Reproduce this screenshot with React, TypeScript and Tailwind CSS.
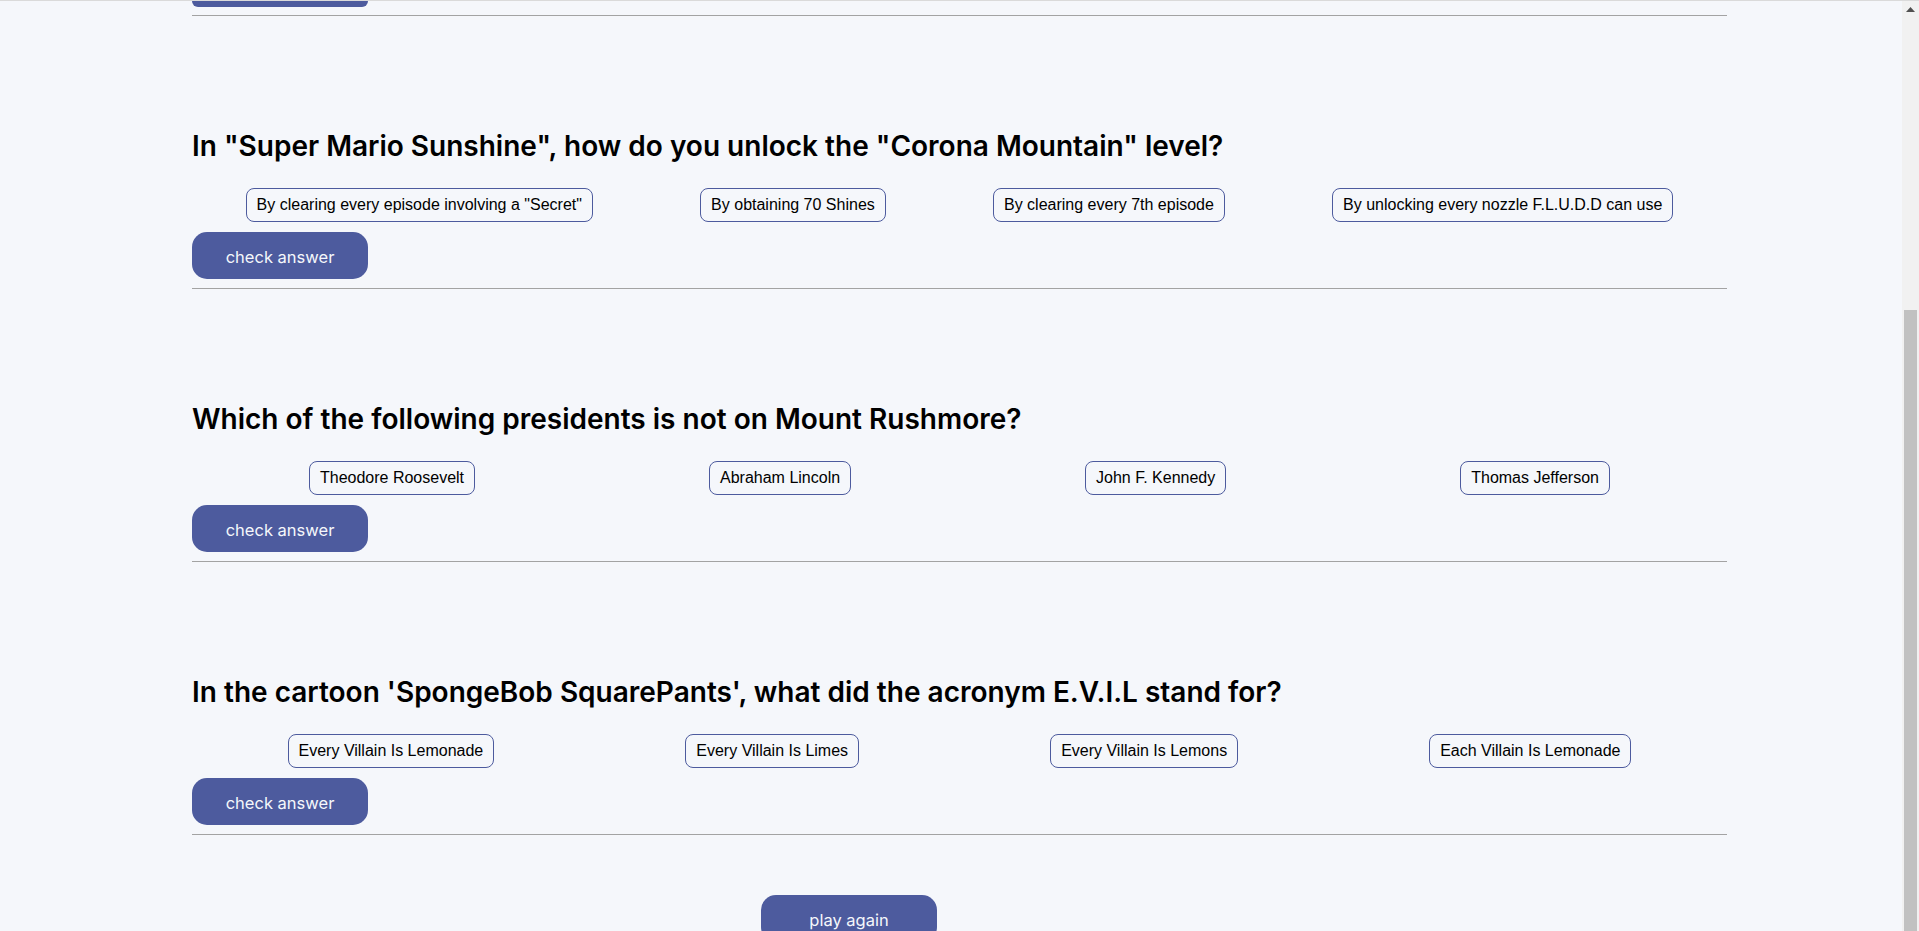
import React from "react";

type Q = { q: string; a: string[] };

const questions: Q[] = [
  {
    q: 'In "Super Mario Sunshine", how do you unlock the "Corona Mountain" level?',
    a: [
      'By clearing every episode involving a "Secret"',
      "By obtaining 70 Shines",
      "By clearing every 7th episode",
      "By unlocking every nozzle F.L.U.D.D can use",
    ],
  },
  {
    q: "Which of the following presidents is not on Mount Rushmore?",
    a: ["Theodore Roosevelt", "Abraham Lincoln", "John F. Kennedy", "Thomas Jefferson"],
  },
  {
    q: "In the cartoon 'SpongeBob SquarePants', what did the acronym E.V.I.L stand for?",
    a: ["Every Villain Is Lemonade", "Every Villain Is Limes", "Every Villain Is Lemons", "Each Villain Is Lemonade"],
  },
];

function PurpleButton({ children }: { children?: React.ReactNode }) {
  return (
    <button className="h-[47px] w-[176px] shrink-0 rounded-[15px] bg-[#4d5b9e] pt-[3px] text-[16.5px] font-normal leading-none text-[#f5f7fb] [font-family:Inter,'Open_Sans',sans-serif]">
      {children}
    </button>
  );
}

function Block({ q }: { q: Q }) {
  return (
    <div className="flex flex-col">
      <h2 className="mt-[113px] h-[34px] text-[28px] font-semibold leading-[34px] text-black [font-family:Inter,'Open_Sans',sans-serif]">
        {q.q}
      </h2>
      <div className="mt-[25px] flex justify-around">
        {q.a.map((t) => (
          <button
            key={t}
            className="h-[34px] rounded-[8px] border border-[#4d5b9e] px-[10px] text-[16px] leading-[18px] text-black [font-family:'Liberation_Sans',Arial,sans-serif]"
          >
            {t}
          </button>
        ))}
      </div>
      <div className="mt-[10px] flex">
        <PurpleButton>check answer</PurpleButton>
      </div>
      <div className="mt-[9px] h-px bg-[#a3a3a3]" />
    </div>
  );
}

export default function App() {
  return (
    <div className="flex h-[931px] w-full flex-col overflow-hidden bg-[#f5f7fb]">
      <div className="h-px w-full shrink-0 bg-[#dadada]" />
      <div className="flex min-h-0 flex-1">
        <div className="min-w-0 flex-1 overflow-hidden">
          <div className="ml-[192px] flex w-[1535px] flex-col">
            <div className="h-[6px] w-[176px] rounded-b-[12px] bg-[#4d5b9e]" />
            <div className="mt-[8px] h-px bg-[#a3a3a3]" />
            {questions.map((q) => (
              <Block key={q.q} q={q} />
            ))}
            <div className="ml-[569px] mt-[60px] flex">
              <PurpleButton>play again</PurpleButton>
            </div>
          </div>
        </div>
        <div className="flex w-[17px] shrink-0 flex-col bg-[#f1f1f1]">
          <div className="flex h-[17px] items-center justify-center">
            <svg width="9" height="5" viewBox="0 0 9 5">
              <path d="M4.5 0 L9 5 L0 5 Z" fill="#505050" />
            </svg>
          </div>
          <div className="h-[292px]" />
          <div className="mx-auto w-[13px] flex-1 bg-[#c1c1c1]" />
        </div>
      </div>
    </div>
  );
}
